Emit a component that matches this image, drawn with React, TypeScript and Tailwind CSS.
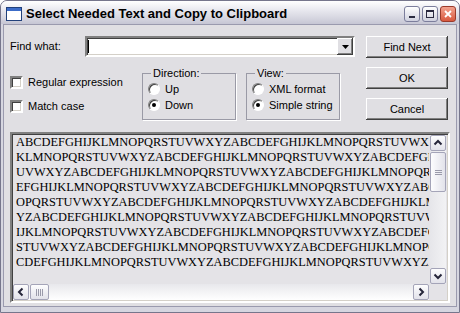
import React from "react";

const ALPHA = "ABCDEFGHIJKLMNOPQRSTUVWXYZ";
const lines = Array.from({ length: 9 }, (_, i) => {
  let s = "";
  for (let k = 0; k < 62; k++) s += ALPHA[(i * 62 + k) % 26];
  return s;
});

const raised =
  "bg-[#e0dfe3] shadow-[inset_-1px_-1px_0_#404040,inset_1px_1px_0_#ffffff,inset_-2px_-2px_0_#808080,inset_2px_2px_0_#e0dfe3]";
const sunken =
  "border-2 border-t-[#808080] border-l-[#808080] border-r-white border-b-white shadow-[inset_1px_1px_0_#404040,inset_-1px_-1px_0_#d4d0c8]";

function Button({ label }: { label: string }) {
  return (
    <div className={`h-[22px] w-[82px] flex items-center justify-center text-[11px] text-black ${raised}`}>
      {label}
    </div>
  );
}

function Checkbox({ label }: { label: string }) {
  return (
    <div className="flex items-center h-[13px]">
      <div className={`w-[13px] h-[13px] bg-white ${sunken}`} />
      <span className="ml-[5px] text-[11px]">{label}</span>
    </div>
  );
}

function Radio({ label, checked }: { label: string; checked?: boolean }) {
  return (
    <div className="flex items-center h-[16px]">
      <div className="w-[12px] h-[12px] rounded-full bg-white border border-t-[#808080] border-l-[#808080] border-r-white border-b-white shadow-[inset_1px_1px_0_#404040] flex items-center justify-center">
        {checked && <div className="w-[4px] h-[4px] rounded-full bg-black" />}
      </div>
      <span className="ml-[5px] text-[11px]">{label}</span>
    </div>
  );
}

function Group({ title, children }: { title: string; children: React.ReactNode }) {
  return (
    <fieldset className="w-[94px] h-[53px] border border-[#9a9aa6] pl-[5px] shadow-[1px_1px_0_#ffffff]">
      <legend className="ml-[3px] px-[2px] text-[11px] leading-[13px]">{title}</legend>
      <div className="pt-px">{children}</div>
    </fieldset>
  );
}

const chevrons: Record<string, string> = {
  up: "M4.5 9.5L8 6l3.5 3.5",
  down: "M4.5 6.5L8 10l3.5-3.5",
  left: "M9.5 4.5L6 8l3.5 3.5",
  right: "M6.5 4.5L10 8l-3.5 3.5",
};

function ScrollBtn({ dir }: { dir: string }) {
  return (
    <div className="w-[16px] h-[16px] rounded-[2px] border border-[#a4a4b8] bg-[linear-gradient(to_bottom,#fdfdfe,#e2e2ea)] flex">
      <svg width="14" height="14" viewBox="1 1 14 14">
        <path d={chevrons[dir]} fill="none" stroke="#26263a" strokeWidth="2" />
      </svg>
    </div>
  );
}

export default function App() {
  return (
    <div className="w-[460px] h-[313px] flex flex-col border border-[#76768c] rounded-t-[7px] bg-[#d6d6e0] overflow-hidden font-['Liberation_Sans',Arial,sans-serif] text-black">
      {/* title bar */}
      <div className="h-[23px] pt-[3px] pl-[5px] pr-[3px] flex items-center bg-[linear-gradient(to_bottom,#ffffff,#ebebf1_35%,#d8d8e2_70%,#c6c6d4)]">
        <svg width="16" height="14" viewBox="0 0 16 14">
          <rect x="0.5" y="0.5" width="15" height="13" fill="#fff" stroke="#21407a" />
          <rect x="1" y="1" width="14" height="3" fill="#3c6cc8" />
        </svg>
        <span className="ml-[4px] text-[13px] font-bold">Select Needed Text and Copy to Clipboard</span>
        <div className="ml-auto flex gap-[2px]">
          <div className="w-[16px] h-[16px] rounded-[3px] border border-[#7c7e9c] bg-[linear-gradient(to_bottom,#ffffff,#cfd0de)] flex items-end pl-[4px] pb-[3px]">
            <div className="w-[6px] h-[2px] bg-[#2a2a40]" />
          </div>
          <div className="w-[16px] h-[16px] rounded-[3px] border border-[#7c7e9c] bg-[linear-gradient(to_bottom,#ffffff,#cfd0de)] flex items-center justify-center">
            <div className="w-[8px] h-[8px] border border-t-2 border-[#2a2a40]" />
          </div>
          <div className="w-[16px] h-[16px] rounded-[3px] border border-[#9a3a2a] bg-[linear-gradient(to_bottom,#f2a28e,#d8583e)] flex items-center justify-center">
            <svg width="8" height="8" viewBox="0 0 8 8">
              <path d="M1 1L7 7M7 1L1 7" stroke="#fff" strokeWidth="1.8" />
            </svg>
          </div>
        </div>
      </div>

      {/* client */}
      <div className="flex-1 px-[2px] pb-[5px] flex">
        <div className="flex-1 border border-[#9a9aae] bg-[#e0dfe3] flex flex-col px-[6px] pt-[11px]">
          <div className="flex">
            <div className="flex flex-col">
              <div className="flex items-center h-[21px]">
                <span className="w-[75px] text-[11px]">Find what:</span>
                <div className={`w-[270px] h-[21px] bg-white flex ${sunken}`}>
                  <div className="flex-1 pl-px pt-[2px]">
                    <div className="w-px h-[13px] bg-black" />
                  </div>
                  <div className={`w-[16px] h-full flex items-center justify-center ${raised}`}>
                    <svg width="7" height="4" viewBox="0 0 7 4">
                      <path d="M0 0h7L3.5 4z" fill="#000" />
                    </svg>
                  </div>
                </div>
              </div>
              <div className="flex mt-[10px]">
                <div className="w-[132px] pt-[9px] flex flex-col gap-[11px]">
                  <Checkbox label="Regular expression" />
                  <Checkbox label="Match case" />
                </div>
                <Group title="Direction:">
                  <Radio label="Up" />
                  <Radio label="Down" checked />
                </Group>
                <div className="w-[10px]" />
                <Group title="View:">
                  <Radio label="XML format" />
                  <Radio label="Simple string" checked />
                </Group>
              </div>
            </div>
            <div className="ml-auto mr-[2px] flex flex-col gap-[9px]">
              <Button label="Find Next" />
              <Button label="OK" />
              <Button label="Cancel" />
            </div>
          </div>

          {/* text box */}
          <div className={`mt-[12px] h-[171px] bg-[#e4e3e7] p-px ${sunken}`}>
            <div className="grid grid-cols-[416px_16px] grid-rows-[149px_16px] gap-x-px">
              <div className="overflow-hidden pl-[3px] font-['Liberation_Serif','Times_New_Roman',serif] text-[12.4px] leading-[15px] text-black">
                {lines.map((l, i) => (
                  <div key={i} className="whitespace-nowrap">{l}</div>
                ))}
              </div>
              <div className="flex flex-col bg-[linear-gradient(to_right,#e6e6ea,#f2f2f4)]">
                <ScrollBtn dir="up" />
                <div className="mt-px w-[16px] h-[40px] rounded-[2px] border border-[#a4a4b8] bg-[linear-gradient(to_right,#fdfdfe,#e2e2ea)] flex items-center justify-center">
                  <svg width="7" height="7" viewBox="0 0 7 7">
                    <path d="M0 1.5h7M0 3.5h7M0 5.5h7" stroke="#9a9aaa" strokeWidth="1" />
                  </svg>
                </div>
                <div className="flex-1" />
                <ScrollBtn dir="down" />
              </div>
              <div className="flex bg-[linear-gradient(to_bottom,#e8e8ec,#ffffff)]">
                <ScrollBtn dir="left" />
                <div className="ml-px w-[19px] h-[16px] rounded-[2px] border border-[#a4a4b8] bg-[linear-gradient(to_bottom,#fdfdfe,#e2e2ea)] flex items-center justify-center">
                  <svg width="7" height="7" viewBox="0 0 7 7">
                    <path d="M0.5 0v7M2.5 0v7M4.5 0v7M6.5 0v7" stroke="#9a9aaa" strokeWidth="1" />
                  </svg>
                </div>
                <div className="flex-1" />
                <ScrollBtn dir="right" />
              </div>
              <div />
            </div>
          </div>
        </div>
      </div>
    </div>
  );
}
